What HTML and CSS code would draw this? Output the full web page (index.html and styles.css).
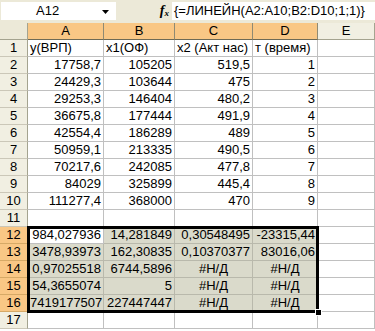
FILE: index.html
```html
<!DOCTYPE html>
<html>
<head>
<meta charset="utf-8">
<link rel="stylesheet" href="styles.css">
</head>
<body>
<div class="app">
  <div class="toolbar">
    <div class="namebox">
      <span class="name">A12</span>
      <svg class="arrow" width="7" height="4" viewBox="0 0 7 4"><path d="M0 0H7L3.5 4Z" fill="#000"/></svg>
    </div>
    <div class="fx"><i>f</i><span class="x">x</span></div>
    <div class="formula">{=ЛИНЕЙН(A2:A10;B2:D10;1;1)}</div>
  </div>
  <div class="sheet">
    <div class="grid">
      <div class="corner"></div>
      <div class="ch sel">A</div><div class="ch sel">B</div><div class="ch sel">C</div><div class="ch sel">D</div><div class="ch">E</div>

      <div class="rh">1</div><div class="c">y(ВРП)</div><div class="c">x1(ОФ)</div><div class="c">x2 (Акт нас)</div><div class="c">т (время)</div><div class="c"></div>
      <div class="rh">2</div><div class="c n">17758,7</div><div class="c n">105205</div><div class="c n">519,5</div><div class="c n">1</div><div class="c"></div>
      <div class="rh">3</div><div class="c n">24429,3</div><div class="c n">103644</div><div class="c n">475</div><div class="c n">2</div><div class="c"></div>
      <div class="rh">4</div><div class="c n">29253,3</div><div class="c n">146404</div><div class="c n">480,2</div><div class="c n">3</div><div class="c"></div>
      <div class="rh">5</div><div class="c n">36675,8</div><div class="c n">177444</div><div class="c n">491,9</div><div class="c n">4</div><div class="c"></div>
      <div class="rh">6</div><div class="c n">42554,4</div><div class="c n">186289</div><div class="c n">489</div><div class="c n">5</div><div class="c"></div>
      <div class="rh">7</div><div class="c n">50959,1</div><div class="c n">213335</div><div class="c n">490,5</div><div class="c n">6</div><div class="c"></div>
      <div class="rh">8</div><div class="c n">70217,6</div><div class="c n">242085</div><div class="c n">477,8</div><div class="c n">7</div><div class="c"></div>
      <div class="rh">9</div><div class="c n">84029</div><div class="c n">325899</div><div class="c n">445,4</div><div class="c n">8</div><div class="c"></div>
      <div class="rh">10</div><div class="c n">111277,4</div><div class="c n">368000</div><div class="c n">470</div><div class="c n">9</div><div class="c"></div>
      <div class="rh">11</div><div class="c"></div><div class="c"></div><div class="c"></div><div class="c"></div><div class="c"></div>

      <div class="rh sel">12</div><div class="c n active">984,027936</div><div class="c n s">14,281849</div><div class="c n s">0,30548495</div><div class="c n s">-23315,44</div><div class="c"></div>
      <div class="rh sel">13</div><div class="c n s">3478,93973</div><div class="c n s">162,30835</div><div class="c n s">0,10370377</div><div class="c n s">83016,06</div><div class="c"></div>
      <div class="rh sel">14</div><div class="c n s">0,97025518</div><div class="c n s">6744,5896</div><div class="c e s">#Н/Д</div><div class="c e s">#Н/Д</div><div class="c"></div>
      <div class="rh sel">15</div><div class="c n s">54,3655074</div><div class="c n s">5</div><div class="c e s">#Н/Д</div><div class="c e s">#Н/Д</div><div class="c"></div>
      <div class="rh sel">16</div><div class="c n s">7419177507</div><div class="c n s">227447447</div><div class="c e s">#Н/Д</div><div class="c e s">#Н/Д</div><div class="c"></div>
      <div class="rh">17</div><div class="c"></div><div class="c"></div><div class="c"></div><div class="c"></div><div class="c"></div>
    </div>
    <div class="selection"><div class="handle"></div></div>
  </div>
</div>
</body>
</html>
```

FILE: styles.css
```css
* { box-sizing: border-box; }
html, body { margin: 0; padding: 0; }
body {
  width: 375px;
  height: 331px;
  overflow: hidden;
  background: #fff;
  font-family: "Liberation Sans", Arial, sans-serif;
  font-size: 13px;
  color: #000;
}
.toolbar {
  height: 23px;
  background: #ECE9D8;
  display: flex;
  align-items: flex-start;
  padding-top: 2px;
  padding-left: 1px;
}
.namebox {
  width: 115px;
  height: 18px;
  background: #fff;
  display: flex;
  align-items: center;
  position: relative;
}
.namebox .name {
  margin-left: 35px;
  line-height: 18px;
}
.namebox .arrow {
  position: absolute;
  left: 101px;
  top: 8px;
}
.fx {
  width: 56px;
  height: 18px;
  display: flex;
  justify-content: flex-end;
  align-items: center;
  padding-right: 3px;
  font-family: "Liberation Serif", "Times New Roman", serif;
  font-weight: bold;
  font-style: italic;
  font-size: 13px;
}
.fx i { font-size: 14px; }
.fx .x { font-size: 9px; margin-left: 0; margin-top: 4px; }
.formula {
  flex: 1;
  height: 18px;
  background: #fff;
  line-height: 18px;
  padding-left: 2px;
  white-space: nowrap;
}
.sheet { position: relative; }
.grid {
  display: grid;
  grid-template-columns: 28px 76px 71px 78px 65px 1fr;
  grid-auto-rows: 17px;
}
.corner {
  background: #ECE9D8;
  border-right: 1px solid #A4A38F;
  border-bottom: 1px solid #A4A38F;
}
.ch {
  background: #F1EFE2;
  border-right: 1px solid #A4A38F;
  border-bottom: 1px solid #A4A38F;
  text-align: center;
  line-height: 16px;
}
.ch.sel {
  background: #F9C785;
  border-right-color: #8F8A73;
  border-bottom-color: #6E6A55;
}
.rh {
  background: #F1EFE2;
  border-right: 1px solid #A4A38F;
  border-bottom: 1px solid #CBC7B8;
  text-align: center;
  line-height: 16px;
}
.rh.sel {
  background: #F9C785;
  border-right-color: #6E6A55;
  border-bottom-color: #D6A966;
}
.c {
  border-right: 1px solid #C0C0C0;
  border-bottom: 1px solid #C0C0C0;
  line-height: 16px;
  padding: 0 2px;
  white-space: nowrap;
  overflow: visible;
}
.c.n { text-align: right; }
.c.e { text-align: center; }
.c.s { background: #DADACB; border-color: #B9B9AC; }
.c.active { background: #fff; }
.selection {
  position: absolute;
  left: 27px;
  top: 203px;
  width: 292px;
  height: 87px;
  border: 3px solid #000;
  border-top-width: 3px;
  pointer-events: none;
}
.handle {
  position: absolute;
  right: -6px;
  bottom: -6px;
  width: 7px;
  height: 7px;
  background: #000;
  border: 1px solid #fff;
}
```
